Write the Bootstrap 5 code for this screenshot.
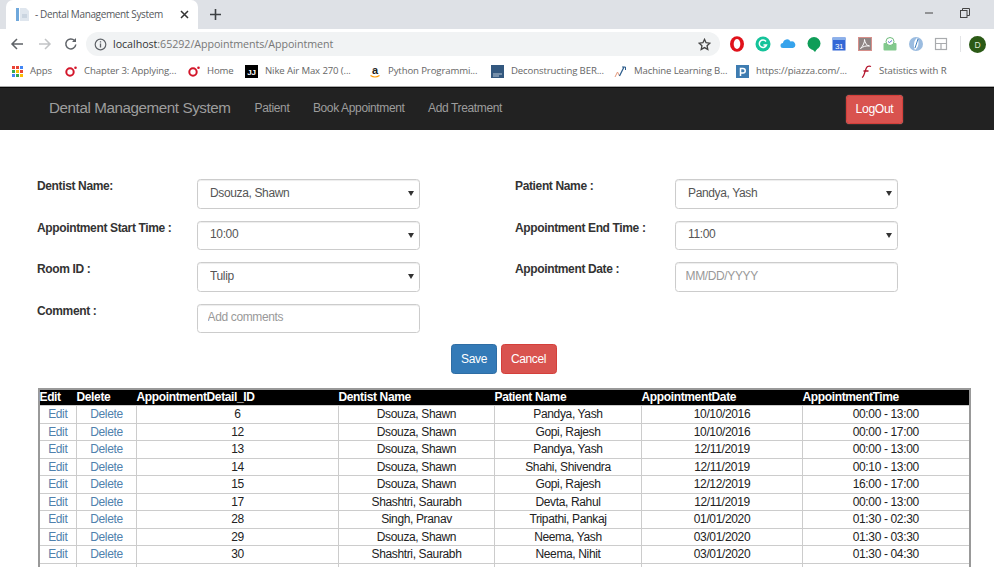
<!DOCTYPE html>
<html lang="en">
<head>
<meta charset="utf-8">
<title>Dental Management System</title>
<link rel="stylesheet" href="https://cdn.jsdelivr.net/npm/bootstrap@5.3.0/dist/css/bootstrap.min.css">
<style>
html,body{height:567px;overflow:hidden;background:#fff}
body{font-family:"Liberation Sans",Arial,sans-serif;font-size:12px;letter-spacing:-.36px;color:#333}
.chrome-ui{font-family:"Open Sans","Noto Sans",sans-serif;color:#5f6368}
.tabstrip{height:29px;background:#dee1e6;padding-left:6px}
.tab-live{width:192px;height:29px;background:#fff;border-radius:7px 7px 0 0;padding:0 9px 0 10px;font-size:10px;letter-spacing:-.36px;color:#55585c;white-space:nowrap}
.tab-label{margin-left:1px}
.tab-x{margin-left:auto;color:#333}
.tab-plus{margin-left:12px}
.win-btns{margin-left:auto;gap:26px;padding-right:24px;margin-bottom:4px}
.toolbar{height:28px;background:#fff;padding:2px 0 0 9px}
.nav-ico{width:26px;height:16px;flex:none}
.omni{width:634px;height:24px;margin-left:-1px;background:#f1f3f4;border-radius:12px;padding:0 9px 0 8px;font-size:10.7px;letter-spacing:-.05px;color:#777}
.omni b{font-weight:400;color:#333}
.omni svg{flex:none}
.omni-url{margin-left:6px}
.star{margin-left:auto}
.ext-set{margin-left:9px;gap:9.5px}
.ext-set svg{flex:none}
.tool-sep{width:1px;height:16px;background:#e3e4e6;margin:0 -1px 0 1px}
.marks{height:30px;display:grid;grid-template-columns:53px 123px 57px 124px 122px 123px 122px 124px auto;padding-left:12px;font-size:9.6px;letter-spacing:-.12px;color:#666;border-bottom:1px solid #aaa;background:#fff;white-space:nowrap}
.mark-it{gap:7px}
.mark-it svg{flex:none}
.topnav{height:43px;background:#222;padding:0 91px 0 49px;border-top:1px solid #080808}
.topnav .navbar-brand{font-size:15.2px;letter-spacing:-.42px;color:#9d9d9d;padding:0 0 2px;margin:0 24px 0 0}
.topnav .nav-link{color:#9d9d9d;font-size:12px;padding:0 0 2px;margin-right:23.5px}
.logout{background:#d9534f;border:1px solid #d43f3a;color:#fff;font-size:12.2px;letter-spacing:-.36px;height:29px;width:57px;padding:0;border-radius:3.5px;margin-left:auto;box-shadow:0 0 1px #e99}
.formzone{padding:49px 0 0 37px}
.frow{height:29.5px;margin-bottom:12px}
.fcell{width:478px}
.flabel{width:160px;font-weight:700;margin:0;line-height:15px;color:#333}
.finput{width:223px;height:29.5px;font-size:12px;letter-spacing:-.36px;color:#555;border:1px solid #ccc;border-radius:3.5px;padding:0 12px 2px;box-shadow:inset 0 1px 1px rgba(0,0,0,.075)}
input.finput{padding:0 9.500px 2px}
.finput::placeholder{color:#999}
select.finput{background-image:url("data:image/svg+xml,%3Csvg xmlns='http://www.w3.org/2000/svg' width='6' height='5'%3E%3Cpath d='M0 0h6L3 5z' fill='%23333'/%3E%3C/svg%3E");background-position:right 5px center;background-size:6px 5px;background-repeat:no-repeat}
.actbar{gap:3.5px;margin:-1px 0 14px 414px;height:30px}
.actbtn{height:30px;font-size:12px;letter-spacing:-.36px;color:#fff;padding:0;border-radius:3.5px}
.save-b{width:46px;background:#337ab7;border:1px solid #2e6da4}
.cancel-b{width:56px;background:#d9534f;border:1px solid #d43f3a}
.gridwrap{margin-left:37.500px;width:933px}
.apt{width:931px;table-layout:fixed;border-collapse:collapse;border:2.500px solid #999;margin:0;font-size:12px;color:#222}
.apt th{background:#000;color:#fff;font-weight:700;padding:0;height:16.500px;line-height:15px;border:0;text-align:left}
.apt td{height:17.500px;line-height:16px;padding:0;border:1px solid #ccc;text-align:center;background:#fff}
.apt a{color:#4f81ad;text-decoration:none}
.c1{width:38px}.c2{width:60px}.c3{width:202px}.c4{width:156px}.c5{width:147px}.c6{width:161px}.c7{width:167px}
</style>
</head>
<body>
<div class="chrome-ui">
  <div class="tabstrip d-flex align-items-end">
    <div class="tab-live d-flex align-items-center">
      <svg width="14" height="15" viewBox="0 0 14 15" class="me-1 flex-none"><rect x="0" y="1" width="3" height="13" fill="#6fa8dc"/><path d="M4 1h6l3 3v10H4z" fill="#dfe6ee"/><path d="M6 8h5M6 10h5" stroke="#b5c3d2"/></svg>
      <span class="tab-label">- Dental Management System</span>
      <svg class="tab-x" width="9" height="9" viewBox="0 0 9 9"><path d="M1 1l7 7M8 1l-7 7" stroke="#333" stroke-width="1.5"/></svg>
    </div>
    <svg class="tab-plus align-self-center" width="11" height="11" viewBox="0 0 11 11"><path d="M5.500 0v11M0 5.500h11" stroke="#3c4043" stroke-width="1.600"/></svg>
    <div class="win-btns d-flex align-items-center align-self-center">
      <svg width="10" height="10" viewBox="0 0 10 10"><path d="M1 5h8" stroke="#444"/></svg>
      <svg width="10" height="10" viewBox="0 0 10 10" fill="none" stroke="#444"><rect x=".5" y="2.500" width="6.500" height="7"/><path d="M2.500 2.500V.5h7v7H7"/></svg>
    </div>
  </div>
  <div class="toolbar d-flex align-items-center">
    <svg class="nav-ico" viewBox="0 0 26 16" fill="none" stroke="#5f6368" stroke-width="1.500"><path d="M14 8H3.500M8 3L3 8l5 5"/></svg>
    <svg class="nav-ico" viewBox="0 0 26 16" fill="none" stroke="#c2c4c6" stroke-width="1.500"><path d="M4 8h10.500M10 3l5 5-5 5"/></svg>
    <svg class="nav-ico" viewBox="0 0 26 16" fill="none" stroke="#5f6368" stroke-width="1.500"><path d="M13.500 4.500A5 5 0 1 0 14.800 8.500"/><path d="M15 2v4h-4" fill="#5f6368" stroke="none"/></svg>
    <div class="omni d-flex align-items-center">
      <svg width="13" height="13" viewBox="0 0 13 13" fill="none" stroke="#5f6368"><circle cx="6.500" cy="6.500" r="5.300" stroke-width="1.200"/><path d="M6.500 5.500v4M6.500 3.200v1.300" stroke-width="1.300"/></svg>
      <span class="omni-url"><b>localhost</b>:65292/Appointments/Appointment</span>
      <svg class="star" width="13" height="13" viewBox="0 0 24 24" fill="none" stroke="#444" stroke-width="2.400"><path d="M12 2.500l2.900 6.300 6.900.8-5.100 4.700 1.400 6.800-6.100-3.400-6.100 3.400 1.400-6.800L2.200 9.600l6.900-.8z"/></svg>
    </div>
    <div class="ext-set d-flex align-items-center">
      <svg width="16" height="16" viewBox="0 0 16 16"><ellipse cx="8" cy="8" rx="7" ry="7.800" fill="#e0121b"/><ellipse cx="8" cy="8" rx="3.300" ry="5" fill="#fff"/></svg>
      <svg width="16" height="16" viewBox="0 0 16 16"><circle cx="8" cy="8" r="7.500" fill="#15c39a"/><path d="M11 5.500A3.700 3.700 0 1 0 11.500 9H8.500" fill="none" stroke="#fff" stroke-width="1.500"/></svg>
      <svg width="16" height="16" viewBox="0 0 16 16"><path d="M3 12a2.500 2.500 0 0 1 0-5 4 4 0 0 1 7.500-1.500A3.300 3.300 0 0 1 13 12z" fill="#36a3ec"/></svg>
      <svg width="16" height="16" viewBox="0 0 16 16"><circle cx="8" cy="7.500" r="6.500" fill="#0f9d58"/><path d="M6 13l3 3 2-3z" fill="#0f9d58"/></svg>
      <svg width="16" height="16" viewBox="0 0 16 16"><rect x="1.500" y="1.500" width="13" height="13" fill="#3367d6"/><rect x="1.500" y="1.500" width="13" height="2.500" fill="#8ab0ea"/><text x="8" y="12.500" text-anchor="middle" font-size="8" fill="#fff" font-family="Liberation Sans">31</text></svg>
      <svg width="16" height="16" viewBox="0 0 16 16"><rect x="1.500" y="1.500" width="13" height="13" fill="#8f8584" stroke="#d78f8a"/><path d="M3.500 12.500C6 10 7.800 6 7.500 3.500 8 7 9.500 9.500 12.500 10 9 9.500 6 10.500 3.500 12.500z" fill="none" stroke="#fff"/></svg>
      <svg width="16" height="16" viewBox="0 0 16 16"><rect x="1.500" y="7" width="13" height="7.500" rx="1" fill="#82c98d"/><circle cx="8" cy="5.500" r="4" fill="#fff" stroke="#6fbb7c"/><path d="M6 5.500l1.500 1 2.500-2" fill="none" stroke="#5b6fcf"/></svg>
      <svg width="16" height="16" viewBox="0 0 16 16"><circle cx="8" cy="8" r="7" fill="#9bbce0"/><path d="M9 2c-3 2-4 8-2 12 3-2 5-8 2-12z" fill="#fff"/><path d="M10 3c-1 3-2 6-3 9" stroke="#3f7fbf" fill="none"/></svg>
      <svg width="16" height="16" viewBox="0 0 16 16" fill="none" stroke="#a9abae" stroke-width="1.200"><rect x="2.500" y="2.500" width="11" height="11"/><path d="M2.500 7.500h11M8 7.500v6"/></svg>
      <span class="tool-sep"></span>
      <svg width="17" height="17" viewBox="0 0 17 17"><circle cx="8.500" cy="8.500" r="8.500" fill="#2b5a16"/><text x="8.500" y="11.500" text-anchor="middle" font-size="8.500" fill="#dfe8d8" font-family="Liberation Sans">D</text></svg>
    </div>
  </div>
  <div class="marks align-items-center">
    <div class="mark-it d-flex align-items-center"><svg width="11" height="11" viewBox="0 0 11 11"><g fill="#ea4335"><rect width="3" height="3"/><rect x="4" width="3" height="3"/></g><rect x="8" width="3" height="3" fill="#4285f4"/><rect y="4" width="3" height="3" fill="#34a853"/><rect x="4" y="4" width="3" height="3" fill="#fbbc05"/><rect x="8" y="4" width="3" height="3" fill="#ea4335"/><rect y="8" width="3" height="3" fill="#4285f4"/><rect x="4" y="8" width="3" height="3" fill="#34a853"/><rect x="8" y="8" width="3" height="3" fill="#fbbc05"/></svg><span>Apps</span></div>
    <div class="mark-it d-flex align-items-center"><svg width="12" height="11" viewBox="0 0 12 11"><circle cx="5" cy="6" r="3.700" fill="none" stroke="#d3162a" stroke-width="2"/><circle cx="10.500" cy="1.800" r="1.300" fill="#d3162a"/></svg><span>Chapter 3: Applying...</span></div>
    <div class="mark-it d-flex align-items-center"><svg width="12" height="11" viewBox="0 0 12 11"><circle cx="5" cy="6" r="3.700" fill="none" stroke="#d3162a" stroke-width="2"/><circle cx="10.500" cy="1.800" r="1.300" fill="#d3162a"/></svg><span>Home</span></div>
    <div class="mark-it d-flex align-items-center"><svg width="13" height="13" viewBox="0 0 13 13"><rect width="13" height="13" fill="#000"/><text x="6.500" y="10" text-anchor="middle" font-size="8" font-weight="700" fill="#fff" font-family="Liberation Sans">JJ</text></svg><span>Nike Air Max 270 (...</span></div>
    <div class="mark-it d-flex align-items-center"><svg width="12" height="13" viewBox="0 0 12 13"><text x="6" y="9" text-anchor="middle" font-size="11" font-weight="700" fill="#222" font-family="Liberation Sans">a</text><path d="M1.500 10.500c3 2 6 2 9 0" fill="none" stroke="#f90" stroke-width="1.200"/></svg><span>Python Programmi...</span></div>
    <div class="mark-it d-flex align-items-center"><svg width="13" height="13" viewBox="0 0 13 13"><rect width="13" height="13" fill="#33587f"/><path d="M2 9h9M2 11h6" stroke="#b8c6d6"/></svg><span>Deconstructing BER...</span></div>
    <div class="mark-it d-flex align-items-center"><svg width="13" height="13" viewBox="0 0 13 13" fill="none"><path d="M1 12l2.500-5 2 4" stroke="#e59a7d"/><path d="M5.500 11L10 2" stroke="#2c5c8c" stroke-width="1.300"/><path d="M8 2h3.500v3" stroke="#2c5c8c"/></svg><span>Machine Learning B...</span></div>
    <div class="mark-it d-flex align-items-center"><svg width="13" height="13" viewBox="0 0 13 13"><rect width="13" height="13" fill="#3e7cb1"/><path d="M4.500 11V3.500h2.500a2.200 2.200 0 0 1 0 4.500H4.500" fill="none" stroke="#fff" stroke-width="1.500"/></svg><span>https://piazza.com/...</span></div>
    <div class="mark-it d-flex align-items-center"><svg width="12" height="13" viewBox="0 0 12 13" fill="none" stroke="#b3122a" stroke-width="1.300"><path d="M2 12.500C5 11 5 3 7.500 1.500c1-.5 2.500-.5 3.500 0M3.500 6h5"/></svg><span>Statistics with R</span></div>
  </div>
</div>
<nav class="navbar topnav d-flex align-items-center flex-nowrap">
  <a class="navbar-brand" href="#">Dental Management System</a>
  <a class="nav-link" href="#">Patient</a>
  <a class="nav-link" href="#">Book Appointment</a>
  <a class="nav-link" href="#">Add Treatment</a>
  <button class="btn logout" type="button">LogOut</button>
</nav>
<main>
  <form class="formzone">
    <div class="frow d-flex">
      <div class="fcell d-flex"><label class="flabel">Dentist Name:</label><select class="form-select finput"><option>Dsouza, Shawn</option></select></div>
      <div class="fcell d-flex"><label class="flabel">Patient Name :</label><select class="form-select finput"><option>Pandya, Yash</option></select></div>
    </div>
    <div class="frow d-flex">
      <div class="fcell d-flex"><label class="flabel">Appointment Start Time :</label><select class="form-select finput"><option>10:00</option></select></div>
      <div class="fcell d-flex"><label class="flabel">Appointment End Time :</label><select class="form-select finput"><option>11:00</option></select></div>
    </div>
    <div class="frow d-flex">
      <div class="fcell d-flex"><label class="flabel">Room ID :</label><select class="form-select finput"><option>Tulip</option></select></div>
      <div class="fcell d-flex"><label class="flabel">Appointment Date :</label><input class="form-control finput" placeholder="MM/DD/YYYY"></div>
    </div>
    <div class="frow d-flex">
      <div class="fcell d-flex"><label class="flabel">Comment :</label><input class="form-control finput" placeholder="Add comments"></div>
    </div>
    <div class="actbar d-flex">
      <button class="btn actbtn save-b" type="button">Save</button>
      <button class="btn actbtn cancel-b" type="button">Cancel</button>
    </div>
  </form>
  <div class="gridwrap">
    <table class="apt">
      <colgroup><col class="c1"><col class="c2"><col class="c3"><col class="c4"><col class="c5"><col class="c6"><col class="c7"></colgroup>
      <thead><tr><th>Edit</th><th>Delete</th><th>AppointmentDetail_ID</th><th>Dentist Name</th><th>Patient Name</th><th>AppointmentDate</th><th>AppointmentTime</th></tr></thead>
      <tbody>
        <tr><td><a href="#">Edit</a></td><td><a href="#">Delete</a></td><td>6</td><td>Dsouza, Shawn</td><td>Pandya, Yash</td><td>10/10/2016</td><td>00:00 - 13:00</td></tr>
        <tr><td><a href="#">Edit</a></td><td><a href="#">Delete</a></td><td>12</td><td>Dsouza, Shawn</td><td>Gopi, Rajesh</td><td>10/10/2016</td><td>00:00 - 17:00</td></tr>
        <tr><td><a href="#">Edit</a></td><td><a href="#">Delete</a></td><td>13</td><td>Dsouza, Shawn</td><td>Pandya, Yash</td><td>12/11/2019</td><td>00:00 - 13:00</td></tr>
        <tr><td><a href="#">Edit</a></td><td><a href="#">Delete</a></td><td>14</td><td>Dsouza, Shawn</td><td>Shahi, Shivendra</td><td>12/11/2019</td><td>00:10 - 13:00</td></tr>
        <tr><td><a href="#">Edit</a></td><td><a href="#">Delete</a></td><td>15</td><td>Dsouza, Shawn</td><td>Gopi, Rajesh</td><td>12/12/2019</td><td>16:00 - 17:00</td></tr>
        <tr><td><a href="#">Edit</a></td><td><a href="#">Delete</a></td><td>17</td><td>Shashtri, Saurabh</td><td>Devta, Rahul</td><td>12/11/2019</td><td>00:00 - 13:00</td></tr>
        <tr><td><a href="#">Edit</a></td><td><a href="#">Delete</a></td><td>28</td><td>Singh, Pranav</td><td>Tripathi, Pankaj</td><td>01/01/2020</td><td>01:30 - 02:30</td></tr>
        <tr><td><a href="#">Edit</a></td><td><a href="#">Delete</a></td><td>29</td><td>Dsouza, Shawn</td><td>Neema, Yash</td><td>03/01/2020</td><td>01:30 - 03:30</td></tr>
        <tr><td><a href="#">Edit</a></td><td><a href="#">Delete</a></td><td>30</td><td>Shashtri, Saurabh</td><td>Neema, Nihit</td><td>03/01/2020</td><td>01:30 - 04:30</td></tr>
        <tr><td>&nbsp;</td><td>&nbsp;</td><td>&nbsp;</td><td>&nbsp;</td><td>&nbsp;</td><td>&nbsp;</td><td>&nbsp;</td></tr>
      </tbody>
    </table>
  </div>
</main>
<script src="https://cdn.jsdelivr.net/npm/bootstrap@5.3.0/dist/js/bootstrap.bundle.min.js"></script>
</body>
</html>
